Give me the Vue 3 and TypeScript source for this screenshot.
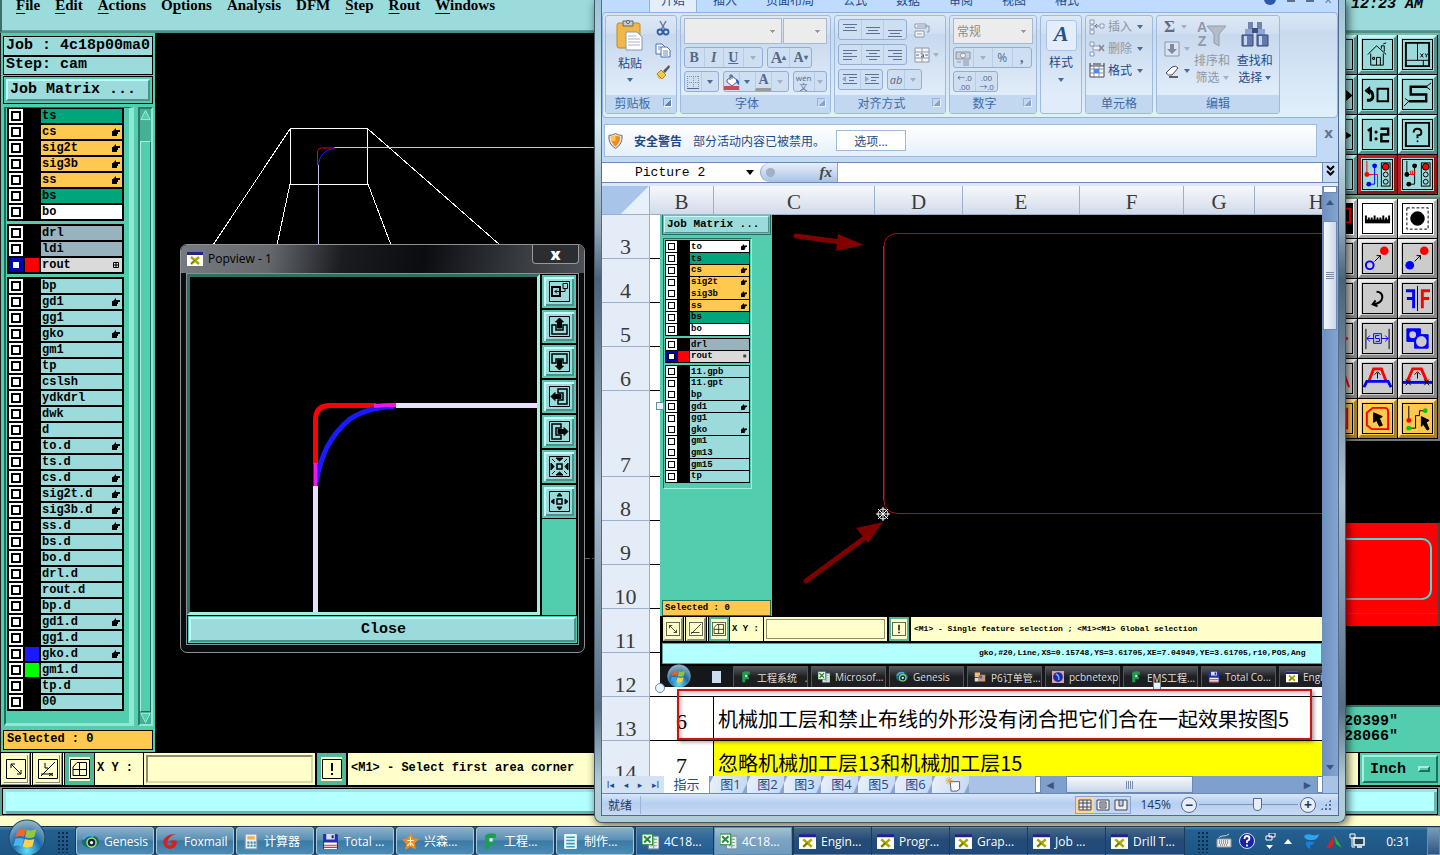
<script setup lang="ts">
import { ref } from 'vue'

interface Layer {
  name: string
  kind?: string
  hand?: boolean
  swatch?: string
  active?: boolean
}

const menus = [
  ['', 'F', 'ile'], ['', 'E', 'dit'], ['', 'A', 'ctions'], ['O', 'p', 'tions'],
  ['Analysis', '', ''], ['DFM', '', ''], ['', 'S', 'tep'], ['', 'R', 'out'], ['', 'W', 'indows'],
]

const plain = (names: string, hands: string[] = []): Layer[] =>
  names.split(' ').map((name) => ({ name, hand: hands.includes(name) }))

const layerGroups = ref<Layer[][]>([
  [
    { name: 'ts', kind: 'mask' },
    { name: 'cs', kind: 'signal', hand: true },
    { name: 'sig2t', kind: 'signal', hand: true },
    { name: 'sig3b', kind: 'signal', hand: true },
    { name: 'ss', kind: 'signal', hand: true },
    { name: 'bs', kind: 'mask' },
    { name: 'bo', kind: 'silk' },
  ],
  [
    { name: 'drl', kind: 'drill' },
    { name: 'ldi', kind: 'drill' },
    { name: 'rout', kind: 'rout', swatch: 'red', active: true },
  ],
  plain(
    'bp gd1 gg1 gko gm1 tp cslsh ydkdrl dwk d to.d ts.d cs.d sig2t.d sig3b.d ss.d bs.d bo.d drl.d rout.d bp.d gd1.d gg1.d gko.d gm1.d tp.d 00',
    ['gd1', 'gko', 'to.d', 'cs.d', 'sig2t.d', 'sig3b.d', 'ss.d', 'gd1.d', 'gko.d'],
  ).map((l) => ({ ...l, swatch: l.name === 'gko.d' ? 'blue' : l.name === 'gm1.d' ? 'lime' : undefined })),
])

const pictureGroups: Layer[][] = [
  [
    { name: 'to', kind: 'silk', hand: true },
    { name: 'ts', kind: 'mask' },
    { name: 'cs', kind: 'signal', hand: true },
    { name: 'sig2t', kind: 'signal', hand: true },
    { name: 'sig3b', kind: 'signal', hand: true },
    { name: 'ss', kind: 'signal', hand: true },
    { name: 'bs', kind: 'mask' },
    { name: 'bo', kind: 'silk' },
  ],
  [
    { name: 'drl', kind: 'drill' },
    { name: 'rout', kind: 'rout', swatch: 'red', active: true },
  ],
  plain('11.gpb 11.gpt bp gd1 gg1 gko gm1 gm13 gm15 tp', ['gd1', 'gko']),
]

const dot = (x: number, y: number, r: number, f: string) => `<circle cx="${x}" cy="${y}" r="${r}" fill="${f}" stroke="none"/>`
const light = `<rect x="19" y="3" width="9" height="24" fill="none"/>${dot(23.5, 7, 3.5, 'red')}<circle cx="23.5" cy="7" r="3.5" fill="none"/><circle cx="23.5" cy="15" r="2.5" fill="none"/><circle cx="23.5" cy="22.5" r="2.5" fill="none"/>`

const toolGroups = [
  {
    tone: 'aqua',
    tools: [
      { t: 'Previous', s: '' },
      { t: 'Home view', s: '<path d="M5 15L14 6l10 9M8 14v12h13V14M14 26v-8h4v8M10 18h2v2h-2zM19 9V6h3v6M21 4l3-1" fill="none"/>' },
      { t: 'Coordinates', s: '<path d="M15 3v18M3 21h24M21 21v6" fill="none"/><path d="M3 3h24v24H3z" stroke-width="2" fill="none"/><path d="M18 14l3 4M21 14l-3 4M23 14l1 2 2-2M24 16v2" fill="none"/>' },
      { t: 'Pan', s: '<path d="M24 11l6 5-6 5z"/>' },
      { t: 'Rotate view', s: '<path d="M15 9h11v13H15z" fill="none" stroke-width="2"/><path d="M4 21h3q4-1 3-6-1-4-4-4" fill="none" stroke-width="3"/><path d="M2 11l5-4v8z"/>' },
      { t: 'Snake', s: '<path d="M25 7H8v8h16v7H6" fill="none" stroke-width="2.5"/><path d="M24 7l5-4M24 7l4 3M6 22l-4-3M6 22l-5 5" fill="none"/>' },
      { t: 'Shift', s: '<path d="M24 13l5 3-5 3z"/>' },
      { t: 'Scale 1:2', s: '<path d="M5 11l3-2v13M18 9h8v6h-7v7h8" fill="none" stroke-width="2.5"/><path d="M12.5 11.5h2v2h-2zM12.5 18.500h2v2h-2z"/>' },
      { t: 'Query', s: '<path d="M3 3h24v24H3z" fill="none" stroke-width="2"/><path d="M11 13q0-4 4-4 4 0 4 4 0 3-4 3v3" fill="none" stroke-width="2"/><path d="M14.5 21.5h1v1h-1z"/>' },
      { t: 'Grid', s: '' },
      { t: 'Net analyzer', red: true, s: `<path d="M4 1v14h11v13" stroke="red" fill="none"/><path d="M12 6v19H6" stroke="blue" fill="none"/>${dot(4, 15, 2.5, 'red')}${dot(12, 6, 2.5, 'blue')}${dot(6, 25, 2.5, 'blue')}${light}` },
      { t: 'Net compare', red: true, s: `<path d="M4 1v14" fill="none"/><path d="M12 6v19H6" fill="none"/><path d="M6 15h6M8 15v-4M10 15v-4M12 15v-4" stroke="red"/>${dot(4, 15, 2.5, '#000')}${dot(12, 6, 2.5, '#000')}${dot(6, 25, 2.5, '#000')}${light}` },
    ],
  },
  {
    tone: 'grey',
    tools: [
      { t: 'Layer colors', white: true, s: '<path d="M0 0h30v30H0z"/><path d="M6 5h22v14H14" stroke="red" fill="none" stroke-width="2"/>' },
      { t: 'Ruler', white: true, s: '<path d="M2 16h26v4H2z" stroke="none"/><path d="M3 12v5M6 14v3M9 14v3M12 12v5M15 14v3M18 14v3M21 12v5M24 14v3M27 12v5" stroke-width="2"/>' },
      { t: 'Select pad', white: true, s: '<path d="M4 4h22v22H4z" fill="none" stroke-dasharray="3 2"/><circle cx="15" cy="15" r="7"/>' },
      { t: 'Change', s: '' },
      { t: 'Move feature', s: `${dot(22, 7, 4.5, 'red')}<circle cx="7" cy="22" r="4" fill="none" stroke="#00f" stroke-width="2"/><path d="M12 18l6-6M14 12h4v4" fill="none"/>` },
      { t: 'Copy feature', s: `${dot(22, 7, 4.5, 'red')}${dot(7, 22, 4.5, '#00f')}<path d="M12 18l6-6M14 12h4v4" fill="none"/>` },
      { t: 'Stretch', s: '' },
      { t: 'Rotate', s: '<path d="M14 8q6 0 6 6-1 6-9 7M13 17l-3 4 5 2" fill="none" stroke-width="2"/>' },
      { t: 'Mirror', s: '<path d="M15 2v26" fill="none"/><path d="M3 7h8v18M4 15h8" fill="none" stroke="#00f" stroke-width="3"/><path d="M28 7h-8v18M27 15h-8" fill="none" stroke="red" stroke-width="3"/>' },
      { t: 'Align', s: '<path d="M18 15h8M22 12l4 3-4 3" stroke="red" fill="none"/>' },
      { t: 'Resize', s: '<path d="M3 5v21M27 5v21" fill="none"/><path d="M4 15h7M19 15h7M7 12l-3 3 3 3M23 12l3 3-3 3M11 10h8v10h-8zM17 12h-4v3h4v3h-4" fill="none" stroke="#00f"/>' },
      { t: 'Group symbols', s: '<path d="M4 5h14v6h8v14H12v-7H4z" fill="#00f" stroke="#00f"/><circle cx="10" cy="11" r="3.5" fill="#ccc" stroke="none"/><circle cx="19" cy="18" r="5.5" fill="#ccc" stroke="none"/>' },
      { t: 'Taper', s: '<path d="M20 4l7 20" stroke="red" stroke-width="2"/>' },
      { t: 'Chamfer', s: '<path d="M6 18l5-13h8l5 13" fill="none" stroke="red" stroke-width="3"/><path d="M1 24l3-6h22l3 6" fill="none" stroke="#00f" stroke-width="3"/><path d="M15 15V9M12 11l3-3 3 3" fill="none"/>' },
      { t: 'Trim', s: '<path d="M4 19l6-14h9l6 14" fill="none" stroke="red" stroke-width="3"/><path d="M0 19h30" stroke="#00f" stroke-width="3"/><path d="M15 15V9M12 11l3-3 3 3M3 16l5 6M8 16l-5 6M22 16l5 6M27 16l-5 6" fill="none"/>' },
      { t: 'Frame', gold: true, s: '<path d="M3 5h22v20H3z" stroke="red" fill="none" stroke-width="2"/>' },
      { t: 'Polygon select', gold: true, s: '<path d="M10 4h12q4 0 4 4v18H9L4 22V9z" fill="none" stroke="red" stroke-width="2"/><path d="M11 9l9 4-3 2 3 7-3 1-3-6-3 2z"/>' },
      { t: 'Net select', gold: true, s: `<path d="M6 2v14" fill="none"/><path d="M6 25h7V12h4V7h7" fill="none"/>${dot(6, 17, 2.5, 'red')}${dot(6, 25, 2.5, '#0c0')}${dot(23, 7, 2.5, '#0c0')}<path d="M19 13l8 4-3 2 3 7-2 1-4-6-2 2z"/>` },
    ],
  },
]

const popTools = [
  { t: 'Zoom area', s: '<path d="M3 6h8v9H3z" fill="none" stroke-width="2"/><path d="M14 2.500h4.500v5H14zM5.500 10.500H16V8M8 8.500l-2 2 2 2" fill="none"/>' },
  { t: 'Up', s: '<path d="M3 9v9h15V9h-4v5H7V9z" fill="none" stroke-width="1.5"/><path d="M10.500 2l4 4h-2v6h-4V6h-2z"/>' },
  { t: 'Down', s: '<path d="M3 12V3h15v9h-4V8H7v4z" fill="none" stroke-width="1.500"/><path d="M10.500 19l4-4h-2V9h-4v6h-2z"/>' },
  { t: 'Left', s: '<path d="M9 3h9v15H9v-4h5V7H9z" fill="none" stroke-width="1.500"/><path d="M2 10.500l4-4v2h6v4H6v2z"/>' },
  { t: 'Right', s: '<path d="M12 3H3v15h9v-4H7V7h5z" fill="none" stroke-width="1.500"/><path d="M19 10.500l-4-4v2H9v4h6v2z"/>' },
  { t: 'Zoom in', s: '<path d="M8 8h5v5H8z" fill="none" stroke-width="1.500"/><path d="M7 2h7l-3.500 3zM7 19h7l-3.500-3zM2 7v7l3-3.500zM19 7v7l-3-3.500zM3 3l3 3M18 3l-3 3M3 18l3-3M18 18l-3-3"/>' },
  { t: 'Zoom out', s: '<path d="M8 8h5v5H8z" fill="none" stroke-width="1.500"/><path d="M8 5h5l-2.500-3zM8 16h5l-2.500 3zM5 8v5l-3-2.500zM16 8v5l3-2.500z"/>' },
]

const ribbonTabs = ['开始', '插入', '页面布局', '公式', '数据', '审阅', '视图', '格式']

const xlogo = '<rect x="0" y="1" width="16" height="14" fill="#fff"/><path d="M0 1h16v3H0z" fill="#228"/><path d="M4 6l8 7M12 6l-8 7" stroke="#aa0" stroke-width="2.500"/><path d="M4 13l4-4" stroke="#660" stroke-width="1"/>'
const icons: Record<string, string> = {
  x: xlogo,
  genesis: '<ellipse cx="8" cy="8" rx="8" ry="6" fill="#1a6a6a"/><circle cx="9" cy="9" r="5" fill="#8fe070"/><circle cx="9" cy="9" r="3.500" fill="#124"/><circle cx="9" cy="9" r="1.500" fill="#fff"/><path d="M1 6q4-6 10-3" stroke="#5ad" stroke-width="2" fill="none"/>',
  foxmail: '<path d="M13 1Q2 1 1 9q1 6 7 6 6-1 6-7-4-3-8 1 3-1 4 1-2 3-5 1Q4 4 13 1z" fill="#d3221e"/>',
  calc: '<rect x="3" y="1" width="11" height="14" fill="#e8f0f8" stroke="#89a"/><path d="M5 3h7v3H5z" fill="#f6b040"/><path d="M5 8h2v2H5zM8 8h2v2H8zM11 8h2v2h-2zM5 11h2v2H5zM8 11h2v2H8zM11 11h2v2h-2z" fill="#48a"/>',
  floppy: '<path d="M1 1h13l1 1v13H1z" fill="#2230b8"/><path d="M4 1h8v5H4z" fill="#dde"/><path d="M9 2h2v3H9z" fill="#228"/><path d="M2 9h12v6H2z" fill="#fff"/><path d="M2 11h12v1H2zM2 13h12v1H2z" fill="#c33"/>',
  star: '<path d="M8 0l2.500 5 5.500.6-4 4 1 6L8 13l-5 3 1-6-4-4L5.500 5z" fill="#f58a1c"/><path d="M8 4v8M5 7h6M5 12l3-3 3 3" stroke="#fff3c0" fill="none"/>',
  f: '<path d="M3 15V2q5-3 10-1v4q-3-1-6 0v3h5v3H7v4z" fill="#1f9d4d"/><path d="M7 5h3v3H7z" fill="#cfe"/>',
  note: '<rect x="2" y="1" width="12" height="14" rx="1" fill="#e8f6fb"/><path d="M4 4h8M4 7h8M4 10h8M4 13h8" stroke="#3a9cb8" stroke-width="1.500"/>',
  excel: '<rect x="6" y="3" width="10" height="12" fill="#e4f2e0" stroke="#789"/><path d="M8 6h6M8 9h6M8 12h6M11 4v10" stroke="#7aa"/><rect x="0" y="1" width="10" height="10" fill="#fff" stroke="#2c8c3c"/><path d="M2 3l6 6M8 3L2 9" stroke="#2c8c3c" stroke-width="2"/>',
  p6: '<path d="M1 2h7v6H1z" fill="#fb6"/><path d="M6 5h9v9H6z" fill="#c96"/><path d="M7 6h4v4H7z" fill="#46c"/><path d="M1 9h5v5H1z" fill="#ddd"/>',
  globe: '<rect width="16" height="16" fill="#d8a0a8"/><circle cx="8" cy="8" r="6.500" fill="#1a2aa8"/><path d="M5 4q5 2 4 8" stroke="#7af" fill="none" stroke-width="2"/>',
  paste: '<rect x="1" y="3" width="23" height="25" rx="2" fill="#f0b848" stroke="#b98a30"/><path d="M7 1h10v5H7z" fill="#c8ccd4" stroke="#666"/><circle cx="12" cy="2" r="1.500" fill="#fff" stroke="#555"/><path d="M10 12h11l5 5v13H10z" fill="#fff" stroke="#8899b0"/><path d="M12 16h8M12 19h12M12 22h12M12 25h12" stroke="#aab4c4"/>',
  cut: '<path d="M5 1l5 9M11 1L6 10" stroke="#6a7a98" stroke-width="1.500"/><circle cx="5" cy="12" r="2.500" fill="none" stroke="#2f5da8" stroke-width="1.800"/><circle cx="11" cy="12" r="2.500" fill="none" stroke="#2f5da8" stroke-width="1.800"/>',
  copy: '<path d="M1 2h6l3 3v7H1z" fill="#fff" stroke="#4a70a8"/><path d="M6 5h6l3 3v7H6z" fill="#fff" stroke="#4a70a8"/><path d="M8 9h5M8 11h5M8 13h5M3 5h3M3 7h2" stroke="#5d89c8"/>',
  brush: '<path d="M14 1l1 2-5 6-2-2z" fill="#555"/><path d="M6 6l5 5-4 4-5-5z" fill="#f2c94a" stroke="#a8862c"/><path d="M1 9l5 6H4z" fill="#e8b030"/>',
  left: '<path d="M1 3.500h14M1 6.500h9M1 9.500h14M1 12.500h9" stroke="#5b7296"/>',
  center: '<path d="M1 3.500h14M4 6.500h8M1 9.500h14M4 12.500h8" stroke="#5b7296"/>',
  right: '<path d="M1 3.500h14M6 6.500h9M1 9.500h14M6 12.500h9" stroke="#5b7296"/>',
  top: '<path d="M1 2.500h14M3 5.500h10M1 8.500h14" stroke="#5b7296"/>',
  mid: '<path d="M1 5.500h14M3 8.500h10M1 11.500h14" stroke="#5b7296"/>',
  bottom: '<path d="M1 8.500h14M3 11.500h10M1 14.500h14" stroke="#5b7296"/>',
  outdent: '<path d="M1 2.500h14M7 5.500h8M7 8.500h5M1 11.500h14" stroke="#5b7296"/><path d="M0 7l4-3v6z" fill="#8fa5c6"/>',
  indent: '<path d="M1 2.500h14M7 5.500h8M7 8.500h5M1 11.500h14" stroke="#5b7296"/><path d="M5 7L1 4v6z" fill="#8fa5c6"/>',
  wrap: '<path d="M1 2h11v4H1zM1 9h9v6H1z" fill="#f4f6fa" stroke="#8a98b0"/><path d="M3 4h12v6h-2M3 12h5" stroke="#8a98b0" fill="none"/>',
  merge: '<path d="M1 1h14v14H1zM1 5h14M1 11h14M8 1v4M8 11v4" fill="#f4f6fa" stroke="#8a98b0"/><path d="M2 8h3M14 8h-3M6.500 7q3-1 3 1v2h-2q-1-1 2-1.500" stroke="#667" fill="none"/>',
  grid: '<path d="M2 2.500h12M2 8.500h12M2.500 2v12M8.500 2v12M13.500 2v12" fill="none" stroke="#7f93b5" stroke-dasharray="1 1"/><path d="M2 14.500h12" stroke="#54698c"/>',
  bucket: '<path d="M3 6l5-4 6 5-6 5-5-4z" fill="#fff" stroke="#46618c"/><path d="M6 6V1h2v4" stroke="#46618c" fill="none"/><path d="M12 5q4 1 3 6-2-1-3-4z" fill="#2d66b8"/><path d="M0 12h16v4H0z" fill="#c44d58"/>',
  money: '<path d="M1 2h14v7H1z" fill="#c9ced8" stroke="#8a93a6"/><circle cx="8" cy="5.500" r="2.500" fill="#eee" stroke="#8a93a6"/><path d="M8 11h6M8 13h6M8 15h6M2 12h4" stroke="#8a93a6"/>',
  insert: '<path d="M1 1h4v4H1zM1 6h4v4H1zM1 11h4v4H1zM11 5h4v4h-4z" fill="#eef" stroke="#8c9ab4"/><path d="M10 7H6M8 5L6 7l2 2" stroke="#777" fill="none"/>',
  del: '<path d="M1 1h4v4H1zM1 11h4v4H1zM4 5h7v4H4z" fill="#eef" stroke="#8c9ab4"/><path d="M10 4l5 6M15 4l-5 6" stroke="#888" stroke-width="1.500"/>',
  format: '<path d="M1 3h14v11H1z" fill="#fff" stroke="#445"/><path d="M1 6h14M1 10h14M5 3v11M10 3v11" stroke="#889"/><path d="M5 6h5v4H5z" fill="#4a8cf0"/><path d="M1 0v3M4 1h8M15 0v3" stroke="#333"/>',
  fill: '<path d="M1 1h14v14H1z" fill="#dde4ee" stroke="#8a98b0"/><path d="M6 3h4v5h3l-5 5-5-5h3z" fill="#7d8ca6"/>',
  erase: '<path d="M2 10l6-6q4-2 6 1l-6 7q-4 1-6-2z" fill="#fff" stroke="#445"/><path d="M5 14h9" stroke="#333" stroke-width="1.500"/>',
  sort: '<path d="M10 6h19l-7 8v12l-5-3v-9z" fill="#b4bcc8" stroke="#929cac"/>',
  find: '<path d="M7 2h5v7H7zM16 2h5v7h-5z" fill="#7184ac"/><path d="M4 9h9v6H4zM15 9h9v6h-9z" fill="#8fa5d6"/><path d="M11 8h6v5h-6z" fill="#3d5180"/><path d="M1 15h11v11H1zM16 15h11v11H16z" fill="#6379ad" stroke="#33466f"/><path d="M3 16h3v9H3zM18 16h3v9h-3z" fill="#c8d5f2"/>',
  shield: '<path d="M8 0q3 2 7 2 1 9-7 14Q0 11 1 2q4 0 7-2z" fill="#e8e8ea" stroke="#666"/><path d="M8 2q3 1 5 1.500Q13 10 8 14 3 10 3 3.500 6 3 8 2z" fill="#f58a1f"/><path d="M8 2v6H3V3.500Q6 3 8 2z" fill="#ffc84a"/>',
}

const tasks = [
  { i: 'genesis', n: 'Genesis' }, { i: 'foxmail', n: 'Foxmail' }, { i: 'calc', n: '计算器' }, { i: 'floppy', n: 'Total ...' },
  { i: 'star', n: '兴森...' }, { i: 'f', n: '工程...' }, { i: 'note', n: '制作...' },
]
const xTasks = ['Engin...', 'Progr...', 'Grap...', 'Job ...', 'Drill T...']
const shotTasks = [
  { i: 'f', n: '工程系统   ...' }, { i: 'excel', n: 'Microsof...' }, { i: 'genesis', n: 'Genesis' }, { i: 'p6', n: 'P6订单管...' },
  { i: 'globe', n: 'pcbnetexp' }, { i: 'f', n: 'EMS工程...' }, { i: 'floppy', n: 'Total Co...' }, { i: 'x', n: 'Enginee' },
]
const emptyRows = [3, 4, 5, 6, 7, 8, 9, 10, 11, 12]
const columns = ['B', 'C', 'D', 'E', 'F', 'G', 'H']
const zoomLevel = ref(145)
const coords = ref('')
const noteRowText = '机械加工层和禁止布线的外形没有闭合把它们合在一起效果按图5'
</script>

<template>
  <div class="desktop">
    <main class="cam">
      <header class="menubar">
        <nav class="menus">
          <button v-for="m in menus" :key="m.join('')" class="menu">{{ m[0] }}<u>{{ m[1] }}</u>{{ m[2] }}</button>
        </nav>
        <time class="clock">12:23 AM</time>
      </header>

      <div class="work">
        <aside class="side">
          <div class="jobinfo">
            <div>Job : 4c18p00ma0</div>
            <div>Step: cam</div>
          </div>
          <div class="matrix"><button class="bevel">Job Matrix ...</button></div>
          <div class="listwrap">
            <div class="list">
              <div v-for="(g, gi) in layerGroups" :key="gi" class="group">
                <label v-for="l in g" :key="l.name" class="layer">
                  <input type="checkbox" class="tick" :class="{ on: l.active }" />
                  <span class="swatch" :class="l.swatch" />
                  <span class="lname" :class="l.kind">{{ l.name }}
                    <svg v-if="l.hand" class="hand" viewBox="0 0 8 8"><path d="M0 3h1l3-3v2h4v2H6v2H5v2H0z" /></svg>
                    <svg v-if="l.active" class="hand" viewBox="0 0 8 8"><path d="M1.500 1.500h5v5h-5zM4 1v6M1 4h6" fill="none" stroke="#000" /></svg>
                  </span>
                </label>
              </div>
            </div>
            <div class="scroll">
              <svg viewBox="0 0 12 12"><path d="M6 1l5 10H1z" fill="#52ceae" stroke="#a8eedd" /></svg>
              <div class="thumb" />
              <svg viewBox="0 0 12 12"><path d="M6 11L1 1h10z" fill="#52ceae" stroke="#a8eedd" /></svg>
            </div>
          </div>
          <div class="selected">Selected : 0</div>
        </aside>

        <section class="canvas">
          <svg width="445" height="719" viewBox="155 33 445 719" fill="none">
            <g shape-rendering="crispEdges" stroke="#fff">
              <path d="M290.500 128.500h77v56h-77zM290 129L213 245M290 184L277 245M368 184L391 245M368 129L500 245" />
            </g>
            <path d="M318.500 165v80M334 147.500H595" stroke="#c9c3ee" />
            <path d="M317.500 165v-13q0-4 5-4h12" stroke="#e00" />
            <path d="M318.500 165q1-14 16-17" stroke="#22f" />
            <path d="M585 558.500h10" stroke="#666" stroke-dasharray="5 2" />
          </svg>
        </section>

        <aside class="right">
          <div v-for="tg in toolGroups" :key="tg.tone" class="tools" :class="tg.tone">
            <button
              v-for="b in tg.tools" :key="b.t" class="tool" :aria-label="b.t"
              :class="{ redbox: 'red' in b, whitebox: 'white' in b, gold: 'gold' in b }"
            >
              <svg viewBox="0 0 30 30" stroke="#000" v-html="b.s" />
            </button>
          </div>
          <div class="overview">
            <svg width="122" height="102" viewBox="0 0 122 102" fill="none">
              <rect x="-20" y="16" width="133" height="60" rx="9" stroke="#40e0e0" stroke-width="2" />
              <path d="M0 76h104" stroke="#999" stroke-width="2" />
              <path d="M0 90.500h120" stroke="#d0109a" />
            </svg>
          </div>
          <div class="coord">20399"<br />28066"</div>
        </aside>
      </div>

      <div class="command">
        <button class="cbtn" aria-label="Select"><svg viewBox="0 0 20 20"><path d="M.500.500h19v19H.500zM5 5l10 10M5 9V5h4M15 11v4h-4" /></svg></button>
        <button class="cbtn" aria-label="Angle"><svg viewBox="0 0 20 20"><path d="M.500.500h19v19H.500zM3 17L17 3M3 15h12M7 4v5h3M11 14l4 3M15 14l-4 3" /></svg></button>
        <button class="cbtn on" aria-label="Grid"><svg viewBox="0 0 20 20"><path d="M3 16.500V8l4-4.500h9.500v13zM3 10.500h14M9.500 3.500v13M.500.500h19v19H.500z" /></svg></button>
        <label class="xy" for="xy">X Y :</label>
        <div class="xybox"><input id="xy" v-model="coords" type="text" /></div>
        <button class="cbtn on" aria-label="Alert"><svg viewBox="0 0 20 20"><path d="M.500.500h19v19H.500z" /><path d="M10 4v8M10 14v2" stroke-width="2" /></svg></button>
        <output class="msg">&lt;M1&gt; - Select first area corner</output>
        <div class="unitbox"><button class="unit">Inch <i /></button></div>
      </div>
      <div class="status"><div /></div>
    </main>

    <section class="popview" aria-label="Popview - 1">
      <header>
        <svg class="ic" viewBox="0 0 16 16" v-html="icons.x" />
        <h2>Popview - 1</h2>
        <button class="close" aria-label="Close window">x</button>
      </header>
      <div class="pbody">
        <div class="pmain">
          <div class="pcanvas">
            <svg width="348" height="337" viewBox="190 277 348 337" fill="none" stroke-width="5">
              <path d="M315.500 464V420Q315.500 405.500 330 405.500H376" stroke="red" />
              <path d="M316.500 482Q322 442 350 419 368 407 394 406.500" stroke="#1a1aff" />
              <path d="M374 406q10-1 22-1M315.500 463v23" stroke="#f018e8" stroke-width="4" />
              <path d="M315.500 486V614M396 405.500H538" stroke="#e8e0fa" />
            </svg>
          </div>
          <div class="ptools">
            <button v-for="p in popTools" :key="p.t" class="ptool" :aria-label="p.t">
              <svg viewBox="0 0 21 21" stroke="#000"><path d="M.500.500h20v20H.500z" fill="none" /><g v-html="p.s" /></svg>
            </button>
          </div>
        </div>
        <div class="pclose"><button class="bevel">Close</button></div>
      </div>
    </section>

    <section class="excel" aria-label="Excel">
      <div class="client">
        <nav class="tabs">
          <span class="orb" />
          <button v-for="(t, i) in ribbonTabs" :key="t" :class="{ cur: i === 0 }">{{ t }}</button>
          <span class="wctl"><i /><i class="w1" /><i class="w2" /><i class="w3">x</i></span>
        </nav>

        <div class="ribbon">
          <section class="rg g1">
            <div class="rb">
              <button class="big"><svg width="28" height="32" viewBox="0 0 28 32" v-html="icons.paste" />粘贴<b class="dn" /></button>
              <div class="stack">
                <button v-for="k in ['cut', 'copy', 'brush']" :key="k" :aria-label="k"><svg class="ic" viewBox="0 0 16 16" v-html="icons[k]" /></button>
              </div>
            </div>
            <h3>剪贴板<i class="launch" /></h3>
          </section>

          <section class="rg g2">
            <div class="rb col">
              <div class="row sel"><select aria-label="字体名称" class="wide"><option /></select><select aria-label="字号"><option /></select></div>
              <div class="row">
                <div class="bg w79"><button class="ser"><b>B</b></button><button class="ser"><em>I</em></button><button class="ser"><u>U</u></button><button><b class="dn dim" /></button></div>
                <div class="bg w45"><button class="ser l">A<sup>▴</sup></button><button class="ser">A<sup>▾</sup></button></div>
              </div>
              <div class="row">
                <div class="bg w35"><button><svg class="ic" viewBox="0 0 16 16" v-html="icons.grid" /></button><button><b class="dn" /></button></div>
                <div class="bg w67"><button><svg class="ic" viewBox="0 0 16 16" v-html="icons.bucket" /></button><button><b class="dn" /></button><button class="ser fc">A</button><button><b class="dn dim" /></button></div>
                <div class="bg w35"><button class="wen"><span>wén</span><span>文</span></button><button class="thin"><b class="dn dim" /></button></div>
              </div>
            </div>
            <h3>字体<i class="launch pale" /></h3>
          </section>

          <section class="rg g3">
            <div class="rb col">
              <div class="row"><div class="bg w69"><button v-for="k in ['top', 'mid', 'bottom']" :key="k" :aria-label="k"><svg class="ic" viewBox="0 0 16 16" v-html="icons[k]" /></button></div><button class="flat" aria-label="自动换行"><svg class="ic" viewBox="0 0 16 16" v-html="icons.wrap" /></button></div>
              <div class="row"><div class="bg w69"><button v-for="k in ['left', 'center', 'right']" :key="k" :aria-label="k"><svg class="ic" viewBox="0 0 16 16" v-html="icons[k]" /></button></div><button class="flat" aria-label="合并"><svg class="ic" viewBox="0 0 16 16" v-html="icons.merge" /><b class="dn dim" /></button></div>
              <div class="row"><div class="bg w45"><button v-for="k in ['outdent', 'indent']" :key="k" :aria-label="k"><svg class="ic" viewBox="0 0 16 16" v-html="icons[k]" /></button></div><div class="bg w35"><button class="slant">ab</button><button><b class="dn dim" /></button></div></div>
            </div>
            <h3>对齐方式<i class="launch pale" /></h3>
          </section>

          <section class="rg g4">
            <div class="rb col">
              <div class="row sel"><select aria-label="数字格式" class="num"><option>常规</option></select></div>
              <div class="row"><div class="bg w79"><button><svg class="ic" viewBox="0 0 16 16" v-html="icons.money" /></button><button><b class="dn dim" /></button><button>%</button><button class="ser">,</button></div></div>
              <div class="row"><div class="bg w45"><button class="dec"><span>←.0</span><span>.00</span></button><button class="dec"><span>.00</span><span>→.0</span></button></div></div>
            </div>
            <h3>数字<i class="launch pale" /></h3>
          </section>

          <section class="rg g5">
            <button class="style"><span>A<i /></span>样式<b class="dn" /></button>
          </section>

          <section class="rg g6">
            <div class="rb col cells">
              <button class="dis"><svg class="ic" viewBox="0 0 16 16" v-html="icons.insert" />插入<b class="dn" /></button>
              <button class="dis"><svg class="ic" viewBox="0 0 16 16" v-html="icons.del" />删除<b class="dn" /></button>
              <button><svg class="ic" viewBox="0 0 16 16" v-html="icons.format" />格式<b class="dn" /></button>
            </div>
            <h3>单元格</h3>
          </section>

          <section class="rg g7">
            <div class="rb">
              <div class="stack edit">
                <button class="sig">Σ<b class="dn dim" /></button>
                <button aria-label="填充"><svg class="ic" viewBox="0 0 16 16" v-html="icons.fill" /><b class="dn dim" /></button>
                <button aria-label="清除"><svg class="ic" viewBox="0 0 16 16" v-html="icons.erase" /><b class="dn" /></button>
              </div>
              <button class="big dis"><span class="az"><svg width="30" height="28" viewBox="0 0 30 28" v-html="icons.sort" /><em><span>A</span><span>Z</span></em></span>排序和<span>筛选<b class="dn dim" /></span></button>
              <button class="big"><svg width="28" height="28" viewBox="0 0 28 28" v-html="icons.find" />查找和<span>选择<b class="dn" /></span></button>
            </div>
            <h3>编辑</h3>
          </section>
        </div>

        <div class="security">
          <div class="sbox">
            <svg class="ic" viewBox="0 0 16 16" v-html="icons.shield" />
            <strong>安全警告</strong>
            <span>部分活动内容已被禁用。</span>
            <button>选项...</button>
          </div>
          <button class="sx" aria-label="关闭">x</button>
        </div>

        <div class="formula">
          <div class="name"><input aria-label="名称框" value="Picture 2" /><b class="dn" /></div>
          <div class="fx"><i /><em>fx</em></div>
          <input class="finput" aria-label="编辑栏" />
          <button aria-label="展开编辑栏"><svg width="9" height="12" viewBox="0 0 9 12"><path d="M1 1l3.500 3.500L8 1M1 6l3.500 3.500L8 6" fill="none" stroke="#000" stroke-width="2" /></svg></button>
        </div>

        <div class="sheetrow">
          <div class="sheet">
            <table>
              <colgroup><col class="k0" /><col v-for="c in columns" :key="c" :class="'k' + c" /></colgroup>
              <thead><tr><th class="corner" /><th v-for="c in columns" :key="c" scope="col">{{ c }}</th></tr></thead>
              <tbody>
                <tr v-for="r in emptyRows" :key="r" :class="{ first: r === 3, tall: r === 7 }"><th scope="row">{{ r }}</th><td /><td colspan="6" /></tr>
                <tr><th scope="row">13</th><td class="no">6</td><td colspan="6" class="txt">{{ noteRowText }}</td></tr>
                <tr><th scope="row" class="last">14</th><td class="no">7</td><td colspan="6" class="txt yellow">忽略机械加工层13和机械加工层15</td></tr>
              </tbody>
            </table>

            <figure class="shot">
              <div class="smain">
                <div class="sside">
                  <div class="matrix"><span class="bevel">Job Matrix ...</span></div>
                  <div class="list">
                    <div v-for="(g, gi) in pictureGroups" :key="gi" class="group" :class="'p' + gi">
                      <div v-for="l in g" :key="l.name" class="layer">
                        <i class="tick" :class="{ on: l.active }" />
                        <span class="swatch" :class="l.swatch" />
                        <span class="lname" :class="l.kind">{{ l.name }}
                          <svg v-if="l.hand" class="hand" viewBox="0 0 8 8"><path d="M0 3h1l3-3v2h4v2H6v2H5v2H0z" /></svg>
                          <svg v-if="l.active" class="hand" viewBox="0 0 8 8"><path d="M3 2h4v4H3z" fill="#444" /></svg>
                        </span>
                      </div>
                    </div>
                  </div>
                  <div class="ssel">Selected : 0</div>
                </div>
                <svg class="sdraw" width="551" height="401" viewBox="772 215 551 401" fill="none">
                  <path d="M1323 233.500H898q-14 0-14 14V500q0 13 14 13.500h425" stroke="#a81414" />
                  <path d="M883.500 246v254" stroke="#e01818" />
                  <path d="M796 236l44 6M806 581l60-44" stroke="#800000" stroke-width="5" stroke-linecap="round" />
                  <path d="M838 234l26 11-28 6zM883 522l-15 21-12-15z" fill="#800000" />
                  <g stroke="#fff"><circle cx="883" cy="514" r="5" /><path d="M876 514h14M883 507v14M878 509l10 10M888 509l-10 10" /></g>
                </svg>
              </div>
              <div class="scmd">
                <span class="cbtn"><svg viewBox="0 0 20 20"><path d="M.500.500h19v19H.500zM5 5l10 10M5 9V5h4M15 11v4h-4" /></svg></span>
                <span class="cbtn"><svg viewBox="0 0 20 20"><path d="M.500.500h19v19H.500zM3 17L17 3M3 15h12" /></svg></span>
                <span class="cbtn on"><svg viewBox="0 0 20 20"><path d="M3 16.500V8l4-4.500h9.500v13zM3 10.500h14M9.500 3.500v13M.500.500h19v19H.500z" /></svg></span>
                <span class="xy">X Y :</span>
                <span class="xybox"><i /></span>
                <span class="cbtn on"><svg viewBox="0 0 20 20"><path d="M.500.500h19v19H.500z" /><path d="M10 4v8M10 14v2" stroke-width="2" /></svg></span>
                <span class="msg">&lt;M1&gt; - Single feature selection ; &lt;M1&gt;&lt;M1&gt; Global selection</span>
              </div>
              <div class="sstat">gko,#20,Line,XS=0.15748,YS=3.61705,XE=7.04949,YE=3.61705,r10,POS,Ang</div>
              <div class="stask">
                <svg class="start" viewBox="0 0 36 36"><circle cx="18" cy="18" r="17" fill="url(#orb)" stroke="#7aa" /><path d="M9 12q4-3 8-1l-2 7q-4-2-8 0z" fill="#e8612a" /><path d="M18 11q4 2 9-1l-2 8q-5 2-9 0z" fill="#8cc63e" /><path d="M7 20q4-2 8 0l-2 7q-4-2-8 0z" fill="#3aa0e8" /><path d="M16 20q4 2 9 0l-2 7q-5 2-9 0z" fill="#ffcf3a" /></svg>
                <i class="mini" />
                <span v-for="t in shotTasks" :key="t.n"><svg class="ic" viewBox="0 0 16 16" v-html="icons[t.i]" />{{ t.n }}</span>
              </div>
            </figure>
            <i class="handle h1" /><i class="handle h2" /><i class="handle h3" />
            <div class="redframe" />
          </div>
          <div class="vscroll"><i class="split" /><b class="up" /><i class="vthumb"><i class="ridge" /></i><b class="dn" /></div>
        </div>

        <div class="sheettabs">
          <div class="nav"><button v-for="n in ['I◂', '◂', '▸', '▸I']" :key="n">{{ n }}</button></div>
          <button class="cur">指示</button>
          <button v-for="n in 6" :key="n" class="st">图{{ n }}</button>
          <button class="st" aria-label="插入工作表"><svg class="ic" viewBox="0 0 16 16"><path d="M5 5h10v8l-3 2H6z" fill="#fff" stroke="#557" /><path d="M4 0v8M0 4h8M1 1l6 6M7 1L1 7" stroke="#e8a030" /></svg></button>
          <div class="hscroll"><i class="split" /><b>◂</b><i class="hthumb"><i class="ridge" /></i><b class="end">▸</b><i class="split" /></div>
        </div>

        <div class="xstatus">
          <span class="ready">就绪</span>
          <div class="views"><button v-for="n in 3" :key="n" :class="{ cur: n === 1 }" :aria-label="'视图 ' + n"><svg viewBox="0 0 14 12"><path v-if="n === 1" d="M1 1h12v10H1zM1 4h12M1 8h12M5 1v10M9 1v10" /><path v-else-if="n === 2" d="M1 1h12v10H1zM4 3h6v6H4zM5 5h4M5 7h4" /><path v-else d="M1 1h12v10H1zM5 1v6h4V1" /></svg></button></div>
          <span class="pct">{{ zoomLevel }}%</span>
          <button class="rnd" aria-label="缩小">−</button>
          <input v-model.number="zoomLevel" type="range" min="10" max="235" aria-label="缩放" />
          <button class="rnd" aria-label="放大">+</button>
          <span class="grip" />
        </div>
      </div>
    </section>

    <footer class="taskbar">
      <button class="startbtn" aria-label="开始">
        <svg viewBox="0 0 36 36">
          <defs><radialGradient id="orb" cx=".5" cy=".85" r=".8"><stop offset="0" stop-color="#5fe0ff" /><stop offset=".5" stop-color="#1c6aa8" /><stop offset="1" stop-color="#8fb0c4" /></radialGradient></defs>
          <circle cx="18" cy="18" r="17" fill="url(#orb)" stroke="#234a66" />
          <path d="M9 11q4-3 8-1l-2 7q-4-2-8 0z" fill="#ea6a2c" /><path d="M18 10q4 2 9-1l-2 8q-5 2-9 0z" fill="#93c83e" /><path d="M7 19q4-2 8 0l-2 7q-4-2-8 0z" fill="#4ab4f0" /><path d="M16 19q4 2 9 0l-2 7q-5 2-9 0z" fill="#ffd24a" />
        </svg>
      </button>
      <i class="dots" />
      <button v-for="t in tasks" :key="t.n" class="task"><svg class="ic" viewBox="0 0 16 16" v-html="icons[t.i]" />{{ t.n }}</button>
      <div class="tgroup">
        <button class="task"><svg class="ic" viewBox="0 0 16 16" v-html="icons.excel" />4C18...</button>
        <button class="task cur"><svg class="ic" viewBox="0 0 16 16" v-html="icons.excel" />4C18...</button>
      </div>
      <div class="tgroup dark">
        <button v-for="t in xTasks" :key="t" class="task"><svg class="ic" viewBox="0 0 16 16" v-html="icons.x" />{{ t }}</button>
      </div>
      <i class="dots" />
      <div class="tray">
        <svg class="ic" viewBox="0 0 16 16"><path d="M1 6h14v8H1z" fill="#e8e8e8" stroke="#999" /><path d="M3 8h10M3 10h10M4 12h8" stroke="#555" stroke-dasharray="1 1" /><path d="M3 5q0-2 4-2t6-2" stroke="#ccc" fill="none" /></svg>
        <svg class="ic" viewBox="0 0 16 16"><circle cx="8" cy="8" r="7.500" fill="#1a22a8" stroke="#dde" /><path d="M5.500 6q0-3 2.500-3t2.500 2.500Q10.500 7 8 8v2M8 11.500v2" stroke="#fff" stroke-width="1.800" fill="none" /></svg>
        <svg class="ic" viewBox="0 0 16 16"><path d="M7 0h6v4H7zM4 3h6v4H4z" fill="#1c4a78" stroke="#fff" /><path d="M4 12h7l-3.500 4z" fill="#fff" /></svg>
        <svg class="ic nudge" viewBox="0 0 16 16"><path d="M4 11l4-5 4 5z" fill="#fff" /></svg>
        <svg class="ic" viewBox="0 0 16 16"><path d="M1 3q3-3 8-1 4 1 7-1-1 6-7 6H7Q2 7 1 3z" fill="#2ba4f5" /><path d="M3 9q4-1 8 0-1 4-4 3v4q-5-2-4-7z" fill="#1880e0" /></svg>
        <svg class="ic" viewBox="0 0 16 16"><path d="M8 2L0 15h4l4-4z" fill="#d82020" /><path d="M8 2l8 13-6-4z" fill="#28b838" /></svg>
        <svg class="ic" viewBox="0 0 16 16"><path d="M5 5h10v7H5zM8 14h5" fill="#245" stroke="#fff" stroke-width="1.500" /><path d="M1 1h5v4H1zM3 5v9h3" fill="none" stroke="#fff" /></svg>
        <time>0:31</time>
      </div>
      <button class="peek" aria-label="显示桌面" />
    </footer>
  </div>
</template>

<style>
body { background: #000; }
</style>

<style scoped>
* { box-sizing: border-box; }
.desktop { position: relative; height: 100vh; overflow: hidden; display: flex; flex-direction: column; font-family: "Open Sans", "Noto Sans CJK SC", sans-serif; font-size: 12px; background: #ffc; color: #000; }
button, input, select { font: inherit; color: inherit; margin: 0; padding: 0; border: 0; background: none; border-radius: 0; }
h2, h3, figure { margin: 0; font-weight: 400; }
i { font-style: normal; }
.ic { width: 16px; height: 16px; flex: none; display: block; }

/* CAM window */
.cam { flex: 1; min-height: 0; display: flex; flex-direction: column; font-family: "Liberation Mono", monospace; font-weight: 700; font-size: 12px; }
.menubar { height: 33px; flex: none; display: flex; justify-content: space-between; background: #9bdbdb; border-left: 2px solid #3d6f68; border-bottom: 2px solid #4f8f84; box-shadow: inset 0 -1px #5f9c9c; padding: 0 17px 0 14px; font-size: 15px; }
.menus { display: flex; gap: 15px; align-items: flex-start; }
.menu { font: 700 15px "Liberation Serif", serif; text-underline-offset: 3px; margin-top: -4px; line-height: 18px; }
.clock { font-style: italic; line-height: 17px; margin-top: -4px; }
.work { flex: 1; min-height: 0; display: flex; }
.side { width: 155px; flex: none; display: flex; flex-direction: column; background: #52ceae; padding: 3px 2px 2px 3px; border-left: 1px solid #222; }
.jobinfo { background: #9bdbdb; border: 1px solid #000; font-size: 15px; line-height: 17px; flex: none; margin-left: -1px; }
.jobinfo div { height: 18px; padding-left: 2px; white-space: nowrap; }
.jobinfo div + div { border-top: 2px solid #000; height: 19px; line-height: 16px; }
.matrix { border: 1px solid #000; margin: 1px 0 0 -1px; padding: 2px; flex: none; }
.bevel { display: block; width: 100%; background: #9bdbdb; border: 2px solid; border-color: #c6ffff #4f8f8c #4f8f8c #c6ffff; text-align: left; padding-left: 2px; font: 700 15px/18px "Liberation Mono", monospace; }
.listwrap { flex: 1; min-height: 0; display: flex; margin-top: 3px; }
.list { width: 130px; background: #52ceae; border-top: 1px solid #1f6e5e; border-left: 2px solid #1f6e5e; border-right: 5px solid #8fe9d2; border-bottom: 3px solid #8fe9d2; overflow: hidden; padding-left: 1px; }
.group { background: #000; padding: 1px 2px; margin-bottom: 3px; width: 117px; }
.group:first-child { padding-top: 0; }
.layer { display: flex; height: 16px; gap: 2px; align-items: center; }
.tick { appearance: none; width: 14px; height: 14px; flex: none; background: #fff; border: 2px solid #fff; box-shadow: inset 0 0 0 2px #000; }
.tick.on { border-color: #0000b4; box-shadow: inset 0 0 0 2px #0000b4; }
.swatch { width: 14px; height: 14px; flex: none; }
.red { background: #f00; } .blue { background: #1a1aff; } .lime { background: #0f0; }
.lname { flex: 1; height: 14px; line-height: 13px; background: #9bdbdb; padding: 0 2px 0 1px; display: flex; align-items: center; justify-content: space-between; }
.hand { width: 8px; height: 8px; flex: none; }
.mask { background: #00a57c; } .signal { background: #ffc84e; } .silk { background: #fff; } .drill { background: #98b3be; } .rout { background: #dadada; }
.scroll { width: 15px; margin-left: 4px; background: #46b095; border: 2px solid; border-color: #2a7a68 #8fe9d2 #8fe9d2 #2a7a68; display: flex; flex-direction: column; }
.scroll svg { width: 11px; height: 12px; }
.thumb { flex: 1; margin-top: 20px; background: #52ceae; border: 1px solid; border-color: #a8eedd #1f6e5e #1f6e5e #a8eedd; }
.selected { flex: none; margin: 4px 0 0 -1px; border: 1px solid #000; background: #ffc84e; height: 20px; line-height: 17px; padding-left: 3px; }
.canvas { flex: 1; min-width: 0; background: #000; overflow: hidden; }
.right { width: 122px; flex: none; background: #000; display: flex; flex-direction: column; }
.tools { display: grid; grid-template-columns: repeat(3, 40px); grid-auto-rows: 40px; border-top: 2px solid #7ba; border-right: 2px solid #5e9c94; border-bottom: 2px solid #7a8; }
.tools.grey { border-color: #777; }
.tool { margin: 0 1px 1px 0; border: 3px solid; background: #9bdbdb; border-color: #c4f4f4 #568e8c #568e8c #c4f4f4; padding: 1px; }
.tool svg { width: 31px; height: 31px; display: block; border: 1px solid #000; }
.grey .tool { background: #ccc; border-color: #eee #888 #888 #eee; }
.grey .whitebox { background: #fff; border-color: #fff #aaa #aaa #fff; }
.grey .gold { background: #ffc84e; border-color: #ffe0a0 #a8802c #a8802c #ffe0a0; }
.tool.redbox { border-color: #c02020 #901818 #901818 #c02020; }
.overview { margin-top: 82px; height: 103px; background: #f00; border-right: 2px solid #444; }
.coord { margin-top: auto; background: #52ceae; border-top: 2px solid #2a7a68; font-size: 15px; line-height: 15px; height: 47px; padding: 7px 0 0 26px; }
.command { height: 35px; flex: none; display: flex; background: #ffc; border-top: 1px solid #000; border-bottom: 2px solid #000; align-items: stretch; }
.cbtn { width: 29px; margin: 0 1px; border: 3px double #a0a080; background: #ffc; padding: 0; border-color: #f2f2b8 #8c8c70 #8c8c70 #f2f2b8; outline: 1px solid #000; outline-offset: 0; display: grid; place-items: center; flex: none; }
.cbtn svg { width: 20px; height: 20px; fill: none; stroke: #000; }
.cbtn + .cbtn { margin-left: 2px; }
.cbtn.on { border: 4px solid #52b89c; }
.xy { padding-left: 2px; width: 48px; line-height: 30px; white-space: nowrap; flex: none; }
.xybox { width: 173px; border: 1px solid #000; border-width: 0 1px; padding: 2px; flex: none; }
.xybox input { width: 100%; height: 100%; border: 2px solid; border-color: #8c8c70 #d8d8a8 #d8d8a8 #8c8c70; background: #ffc; padding-left: 4px; }
.msg { flex: 1; padding-left: 3px; line-height: 30px; border-left: 1px solid #000; white-space: nowrap; overflow: hidden; }
.unitbox { width: 82px; border-left: 2px solid #000; padding: 2px; background: #52ceae; }
.unit { width: 100%; height: 100%; border: 2px solid; border-color: #a8eedd #1f6e5e #1f6e5e #a8eedd; font-size: 15px; display: flex; justify-content: space-around; align-items: center; }
.unit i { width: 12px; height: 6px; border: 2px solid; border-color: #a8eedd #1f6e5e #1f6e5e #a8eedd; }
.status { height: 29px; flex: none; background: #5f9c94; padding: 1px 2px 1px 2px; margin-bottom: 10px; }
.status div { height: 100%; background: #b4ffff; border: 1px solid #000; box-shadow: inset 3px 3px #9be4e4, inset -3px -3px #6fb0b0, inset 0 0 0 4px #b4ffff; }

/* Popview */
.popview { position: absolute; left: 180px; top: 244px; width: 405px; height: 409px; background: #0a0c0e; border: 1px solid #8a9298; border-radius: 7px; padding: 0 5px 7px 5px; display: flex; flex-direction: column; }
.popview header { height: 28px; display: flex; align-items: center; gap: 5px; background: linear-gradient(100deg, #777b80, #65686d 22%, #1a1c20 40%, #0a0c10 60%, #3a3d42 85%, #4c4f54); margin: 0 -5px; padding: 0 5px 0 6px; border-radius: 6px 6px 0 0; }
.popview h2 { flex: 1; font-size: 12px; line-height: 20px; color: #000; }
.close { align-self: flex-start; width: 47px; height: 19px; border: 1px solid #999; border-top: 0; border-radius: 0 0 4px 4px; background: #2b2d31; color: #fff; font-weight: 800; font-size: 16px; line-height: 14px; }
.pbody { flex: 1; min-height: 0; display: flex; flex-direction: column; border: 1px solid #8a9298; background: #52ceae; }
.pmain { flex: 1; min-height: 0; display: flex; }
.pcanvas { flex: 1; background: #000; border: 3px solid; border-color: #2f6e60 #a8eedd #a8eedd #2f6e60; overflow: hidden; }
.ptools { width: 38px; border: 0 solid #000; border-width: 1px 2px 0; display: flex; flex-direction: column; }
.ptool { height: 33px; margin-bottom: 2px; outline: 1px solid #000; border: 2px solid #5cc4ac; background: #9bdbdb; box-shadow: inset 2px 2px #c6ffff, inset -2px -2px #4f8f8c; display: grid; place-items: center; }
.ptool svg { width: 21px; height: 21px; display: block; }
.pclose { flex: none; height: 29px; border: 1px solid #000; padding: 1px; }
.pclose .bevel { height: 100%; text-align: center; line-height: 20px; }

/* Excel */
.excel { position: absolute; left: 594px; top: 0; width: 752px; bottom: 32px; border: 1px solid #456; border-top: 0; border-radius: 0 0 8px 8px; padding: 0 6px 6px; background: linear-gradient(#9cc4d4, #d4eaf2 15%, #8ca4b4 28%, #4a6278 34%, #a8c0d0 60%, #566e84 86%, #b0ccd6 95%); box-shadow: 2px 2px 10px #000a; color: #1e395b; }
.client { height: 100%; display: flex; flex-direction: column; background: #c3daf5; border: 1px solid #4c6c94; border-top: 0; overflow: hidden; }
.tabs { height: 12px; flex: none; display: flex; align-items: flex-end; background: #bfdbff; color: #1e4a8a; position: relative; }
.tabs button { height: 30px; line-height: 16px; padding: 8px 13px 0; margin-right: 3px; width: auto; }
.tabs button.cur { background: #e4eefb; border: 1px solid #8db2e3; border-bottom: 0; padding: 7px 11px 0; }
.tabs .orb { width: 47px; flex: none; }
.wctl { margin-left: auto; display: flex; align-items: flex-end; gap: 11px; color: #5b6f8d; padding-right: 5px; height: 20px; padding-bottom: 7px; }
.wctl i { width: 12px; height: 12px; border-radius: 6px; background: #2b58a8; }
.wctl .w1, .wctl .w2 { height: 2px; border-radius: 0; background: #5b6f8d; width: 8px; margin-bottom: 3px; }
.wctl .w3 { background: none; line-height: 12px; width: 8px; }
.ribbon { height: 106px; flex: none; display: flex; gap: 3px; padding: 2px 2px 3px; border: 1px solid #8db2e3; border-radius: 4px; background: linear-gradient(#dbe6f4, #cfdff2 16%, #c9daef 17%, #e0f0fb); }
.rg { border: 1px solid #9ebbde; border-radius: 3px; display: flex; flex-direction: column; background: linear-gradient(#dde8f5, #d0dff1 18%, #c8d9ee 19%, #e0ecf9 80%); }
.g1 { width: 72px; } .g2 { width: 151px; } .g3 { width: 112px; } .g4 { width: 88px; } .g5 { width: 42px; } .g6 { width: 68px; } .g7 { width: 124px; }
.rb { flex: 1; min-height: 0; display: flex; padding: 2px 3px 0; }
.rb.col { flex-direction: column; gap: 3px; }
.g3 .rb.col { padding-top: 3px; gap: 4px; }
.rg h3 { height: 18px; background: #c1d8f0; color: #3e6aaa; font-size: 12px; line-height: 18px; text-align: center; display: flex; justify-content: center; position: relative; }
.g1 h3, .g2 h3, .g3 h3, .g4 h3 { padding-right: 17px; }
.launch { position: absolute; right: 5px; top: 3px; width: 8px; height: 8px; border: 1px solid #7d9cc6; border-width: 1px 0 0 1px; box-shadow: 1px 1px #fff; background: linear-gradient(135deg, transparent 55%, #6482b0 56%); }
.pale { opacity: .6; }
.row { display: flex; gap: 4px; height: 21px; }
.row.sel { height: 26px; gap: 0; }
select { appearance: none; border: 1px solid #a9b8cc; background: #ececec linear-gradient(#8a8a8a, #8a8a8a) no-repeat right 6px center / 5px 1px; flex: 1; padding-left: 3px; color: #8d8d8d; background-image: linear-gradient(#9a9a9a, #9a9a9a), linear-gradient(#9a9a9a, #9a9a9a), linear-gradient(#9a9a9a, #9a9a9a); background-position: right 6px top 11px, right 7px top 12px, right 8px top 13px; background-size: 5px 1px, 3px 1px, 1px 1px; }
select.wide { flex: 2 1 20px; margin-right: 1px; }
.bg { display: flex; border: 1px solid #92aed4; border-radius: 3px; background: #cfdff2; height: 21px; }
.bg button { flex: 1; display: grid; place-items: center; color: #54698c; line-height: 18px; min-width: 0; }
.bg button + button { border-left: 1px solid #b8cce6; }
.w79 { width: 79px; } .w45 { width: 45px; } .w35 { width: 35px; } .w67 { width: 67px; } .w69 { width: 69px; }
.ser { font: 700 14px "Liberation Serif", serif; }
.bg button.l { font-size: 16px; }
.bg .ser { display: flex; justify-content: center; }
.ser sup { font-size: 8px; line-height: 8px; }
.bg .fc { border-bottom: 3px solid #9a9a9a; line-height: 14px; }
.bg .wen, .bg .dec { display: flex; flex-direction: column; justify-content: center; align-items: center; white-space: nowrap; }
.wen span, .dec span { line-height: 9px; font-size: 8px; height: 9px; }
.bg .wen { flex: none; width: 20px; }
.bg .slant { font-style: italic; font-size: 11px; }
.flat { display: flex; align-items: center; gap: 3px; padding-left: 3px; }
.dn { display: inline-block; width: 0; height: 0; border: 3px solid transparent; border-top: 4px solid #4a6a9c; border-bottom: 0; flex: none; }
.dn.dim { border-top-color: #a3b1c6; }
.big { width: 42px; display: flex; flex-direction: column; align-items: center; color: #1e4a8a; line-height: 16px; padding-top: 2px; white-space: nowrap; }
.big .dn { margin-top: 6px; }
.big span .dn { margin: 0 0 2px 3px; }
.g1 .big svg { margin-bottom: 4px; }
.stack { display: flex; flex-direction: column; gap: 6px; padding: 2px 0 0 4px; }
.stack button { height: 16px; display: flex; align-items: center; gap: 4px; }
.dis { color: #8f97a3; }
.big.dis, .cells .dis { color: #8f97a3; }
.cells { color: #1e4a8a; }
.rb.cells { gap: 6px; padding-top: 3px; }
.cells button { display: flex; align-items: center; gap: 3px; height: 16px; line-height: 16px; white-space: nowrap; }
.cells .dn { margin-left: 2px; }
.edit { width: 31px; padding-top: 1px; }
.sig { font: 700 17px/16px "Liberation Serif", serif; color: #5c6b84; }
.sig .dn { margin-left: 2px; }
.g7 .big { width: 43px; line-height: 17px; }
.g7 .big svg { margin-bottom: 4px; display: block; }
.az { position: relative; display: block; }
.az em { position: absolute; left: 0; top: 0; display: flex; flex-direction: column; font: 700 14px "Liberation Sans", sans-serif; color: #8f98a9; }
.az em span { height: 14px; line-height: 14px; }
.style { height: 100%; display: flex; flex-direction: column; align-items: center; color: #1e4a8a; line-height: 16px; padding-top: 4px; }
.style span { width: 31px; height: 31px; border: 1px solid #a9c4e6; border-radius: 3px; background: #e4eefa; font: italic 700 22px/26px "Liberation Serif", serif; color: #2a4d8c; margin-bottom: 4px; }
.style .dn { margin-top: 7px; }
.security { flex: none; display: flex; justify-content: space-between; padding: 6px 1px 5px 2px; }
.sbox { flex: 1; height: 33px; border: 1px solid #9ebbde; background: linear-gradient(#fff, #e4f0fb); display: flex; align-items: center; padding-left: 3px; color: #1e4a8a; gap: 11px; }
.sbox .ic { width: 15px; }
.sbox button { width: 70px; height: 21px; border: 1px solid #9ebbde; background: #fff; }
.sx { width: 20px; height: 16px; color: #67758c; font-weight: 700; font-size: 15px; line-height: 14px; padding-left: 3px; }
.formula { height: 21px; flex: none; display: flex; border: 1px solid #6a8ab8; border-width: 1px 0; background: #fff; }
.name { width: 158px; display: flex; align-items: center; color: #000; }
.name input { width: 144px; padding-left: 33px; font: 13px "Liberation Mono", monospace; }
.name .dn { border-width: 4px; border-top: 5px solid #000; border-bottom: 0; }
.fx { width: 78px; display: flex; justify-content: space-between; align-items: center; padding: 0 5px; border: 1px solid #8aa6d0; border-width: 0 1px; border-radius: 10px 0 0 10px; background: linear-gradient(#e8f0fa, #a8c2e6); }
.fx i { width: 9px; height: 9px; border-radius: 5px; background: #9fb0c8; }
.fx em { font: italic 700 15px "Liberation Serif", serif; color: #444; }
.finput { flex: 1; min-width: 0; }
.formula button { width: 16px; background: #c9dcf4; border-left: 1px solid #6a8ab8; }
.sheetrow { flex: 1; min-height: 0; display: flex; border-top: 3px solid #dbe8f8; }
.sheet { flex: 1; min-width: 0; position: relative; overflow: hidden; background: #fff; }
table { table-layout: fixed; width: 722px; border-collapse: separate; border-spacing: 0; color: #000; }
.k0 { width: 48px; } .kB { width: 64px; } .kC { width: 161px; } .kD { width: 88px; } .kE { width: 117px; } .kF { width: 104px; } .kG { width: 71px; }
th { font: 22px/22px "Liberation Serif", serif; color: #3a3a3a; padding: 0; }
thead th { height: 29px; padding-top: 4px; background: linear-gradient(#f6f8fc, #d2dbea); border-right: 1px solid #9ab0cf; border-bottom: 1px solid #9ab0cf; font-size: 21px; }
thead th:last-child { border-right: 0; text-align: right; }
.corner { background: linear-gradient(135deg, #a9c4e9 62%, #e8f0fa 63%); }
tbody tr { height: 44px; }
tbody .tall { height: 86px; }
tbody th { background: #e4ecf7; border: 0 solid #9ab0cf; border-width: 0 1px 1px 0; vertical-align: bottom; }
td { border-bottom: 1px solid #000; padding: 0; vertical-align: middle; }
.no { text-align: center; font: 22px "Liberation Serif", serif; border-right: 1px solid #000; padding-top: 6px; }
.txt { font: 20px/28px "Noto Sans CJK SC", sans-serif; padding-left: 4px; white-space: nowrap; }
.yellow { background: #ff0; }
.shot { position: absolute; left: 58px; top: 29px; right: 0; height: 472px; display: flex; flex-direction: column; overflow: hidden; background: #000; font: 700 9px "Liberation Mono", monospace; color: #000; }
.smain { height: 401px; flex: none; display: flex; }
.sside { width: 112px; flex: none; background: #52ceae; display: flex; flex-direction: column; padding: 0 1px 0 2px; }
.sdraw { flex: none; }
.sside .matrix { margin: 0 0 3px; padding: 1px; border-top: 0; border-color: #1f6e5e; }
.sside .bevel { font-size: 11px; line-height: 15px; border-width: 1px; }
.sside .list { width: 89px; height: 251px; border: 1px solid #1f6e5e; border-right-color: #a8eedd; border-bottom-color: #a8eedd; padding: 1px; margin-left: 1px; }
.sside .group { width: 85px; padding: 1px; margin-bottom: 2px; display: flex; flex-direction: column; }
.p0 { height: 96px; } .p1 { height: 25px; } .p2 { height: 118px; }
.sside .layer { flex: 1; height: auto; gap: 1px; }
.sside .tick { width: 11px; height: 11px; box-shadow: inset 0 0 0 1px #000; border-width: 2px; }
.sside .swatch { width: 11px; height: 11px; }
.sside .lname { height: 11px; line-height: 10px; padding-left: 1px; }
.sside .hand { width: 6px; height: 6px; }
.ssel { margin: auto 0 0; height: 16px; background: #ffc84e; border: 1px solid #1f6e5e; line-height: 14px; padding-left: 2px; }
.scmd { height: 25px; flex: none; display: flex; background: #ffc; border-bottom: 1px solid #000; margin-top: 1px; margin-left: 2px; }
.scmd .cbtn { width: 20px; border-width: 2px; }
.scmd .cbtn svg { width: 14px; height: 14px; }
.scmd .xy { width: 33px; line-height: 24px; }
.scmd .xybox { width: 125px; }
.scmd .xybox i { display: block; height: 100%; border: 1px solid #8c8c70; }
.scmd .msg { line-height: 24px; font-size: 8px; }
.sstat { height: 21px; flex: none; margin: 1px 0 2px 2px; background: #b4ffff; border: 1px solid #5f9c94; line-height: 18px; white-space: nowrap; padding-left: 316px; overflow: hidden; font-size: 8px; }
.stask { flex: 1; display: flex; gap: 3px; background: #15181b; padding-bottom: 1px; color: #ddd; font: 10px "Open Sans", "Noto Sans CJK SC", sans-serif; }
.stask .start { width: 26px; height: 24px; margin: -2px 0 0 6px; flex: none; }
.mini { width: 9px; height: 12px; background: #cde; margin: 5px 9px 0 17px; flex: none; }
.stask span { width: 75px; flex: none; border: 1px solid #555; background: linear-gradient(#55585c, #1d1f22 50%); display: flex; align-items: center; padding-left: 6px; gap: 5px; white-space: pre; overflow: hidden; }
.stask .ic { width: 12px; height: 12px; }
.handle { position: absolute; width: 8px; height: 8px; background: #e8f4fa; border: 1px solid #6a8aa0; }
.h1 { left: 54px; top: 216px; } .h2 { left: 53px; top: 497px; width: 10px; height: 10px; border-radius: 5px; } .h3 { left: 551px; top: 496px; }
.redframe { position: absolute; left: 75px; top: 503px; width: 635px; height: 51px; border: 2px solid #c81414; box-shadow: 2px 2px 4px #0006, inset 2px 2px 4px #0004; }
.vscroll { width: 16px; flex: none; background: linear-gradient(90deg, #6e90c0, #86a4ce); display: flex; flex-direction: column; align-items: center; }
.split { background: #fff; border: 1px solid #6a8ab8; }
.vscroll .split { width: 14px; height: 7px; }
.up { border: 4px solid transparent; border-bottom: 5px solid #3c5580; border-top: 0; margin: 7px 0 16px; }
.vthumb { width: 14px; height: 109px; border: 1px solid #6a8ab8; background: linear-gradient(90deg, #f4f7fb, #cbd8ea); display: grid; place-items: center; }
.ridge { width: 8px; height: 8px; background: repeating-linear-gradient(#7a8eac 0 1px, transparent 1px 2px); }
.hthumb .ridge { background: repeating-linear-gradient(90deg, #7a8eac 0 1px, transparent 1px 2px); }
.vscroll .dn { margin: auto 0 6px; border-width: 4px; border-top: 5px solid #3c5580; border-bottom: 0; }
.sheettabs { height: 18px; flex: none; display: flex; background: #a9c2e6; border-bottom: 1px solid #6a8ab8; line-height: 17px; font-size: 13px; color: #1e4a8a; white-space: nowrap; }
.nav { width: 62px; display: flex; justify-content: space-around; background: #d4e2f4; font: 9px "DejaVu Sans", sans-serif; }
.sheettabs .cur { width: 46px; background: #fff; border-right: 1px solid #7f9cc8; }
.st { width: 37px; padding-left: 4px; background: linear-gradient(115deg, #8aa6d0 6%, #e6eefa 9%, #c8daf2 88%, #8aa6d0 91%); }
.st .ic { height: 15px; margin-left: 9px; }
.hscroll { margin-left: auto; width: 288px; display: flex; background: #7f9fcd; margin-right: 15px; color: #3c5580; }
.hscroll .split { width: 6px; }
.hscroll b { padding: 0 6px; }
.hthumb { width: 127px; margin-left: 6px; border: 1px solid #6a8ab8; background: linear-gradient(#f8fafd, #c8d6ea); display: grid; place-items: center; }
.hscroll .end { margin-left: auto; }
.xstatus { height: 21px; flex: none; display: flex; align-items: center; background: linear-gradient(#d8e6f8, #b6cef0 45%, #c8daf4); padding: 0 6px; color: #1e395b; }
.ready { padding-right: 8px; border-right: 1px solid #9ab4da; }
.views { margin-left: auto; display: flex; border: 1px solid #8aa6d0; }
.views button { width: 18px; height: 16px; display: grid; place-items: center; }
.views .cur { background: #fbd896; }
.views svg { width: 14px; height: 12px; fill: #eee; stroke: #445; }
.pct { padding: 0 10px 0 9px; }
.rnd { width: 16px; height: 16px; border: 1px solid #51689a; border-radius: 8px; line-height: 12px; font-weight: 700; font-size: 14px; background: #e8eef8; }
input[type="range"] { appearance: none; width: 99px; height: 16px; margin: 0 2px; background: linear-gradient(#7f95bb, #7f95bb) no-repeat center / 100% 1px; }
input[type="range"]::-webkit-slider-thumb { appearance: none; width: 9px; height: 13px; border: 1px solid #51689a; border-radius: 1px 1px 5px 5px; background: #e8eef8; }
.grip { width: 12px; height: 12px; margin-left: 4px; background: radial-gradient(#4f6fa4 1px, transparent 1px) 0 0 / 4px 4px; clip-path: polygon(100% 0, 100% 100%, 0 100%); }

/* Taskbar */
.taskbar { height: 29px; flex: none; position: relative; display: flex; align-items: stretch; gap: 2px; background: linear-gradient(#4a86b4, #24608f 12%, #1d5484); border-top: 1px solid #17304a; color: #fff; }
.startbtn { width: 54px; flex: none; }
.startbtn svg { width: 38px; height: 38px; display: block; margin: -8px 0 0 8px; position: relative; }
.dots { width: 12px; flex: none; margin: 4px 5px 0 1px; height: 22px; background: radial-gradient(#0a2c4c 1px, transparent 1px) 0 0 / 4px 4px; }
.task { width: 78px; flex: none; margin: 0; border: 1px solid #a4c8de; border-radius: 3px; background: linear-gradient(#8ab0c8, #5a8fb4 45%, #3c7aa4 50%, #4a8cb4); box-shadow: 0 0 0 1px #1a3c58; display: flex; align-items: center; gap: 5px; padding-left: 5px; white-space: nowrap; overflow: hidden; }
.task .ic { width: 17px; height: 17px; }
.tgroup { display: flex; border-radius: 3px; flex: none; }
.tgroup .task { border-radius: 0; background: linear-gradient(#4878a0, #2c6698 45%, #245c90); border-color: #5a8cb4; }
.tgroup .task.cur { background: linear-gradient(#a8c0d0, #7ca4c2 45%, #6c9cc0); }
.dark .task { background: linear-gradient(#486888, #254c78 45%, #1f4a7a); border-color: #6484a8; border-width: 1px 0; }
.dark + .dots { margin-left: auto; margin-right: 2px; }
.tray { display: flex; align-items: center; gap: 7px; padding: 0 15px 0 3px; flex: none; }
.tray .nudge { margin-left: -5px; }
.tray time { margin-left: 14px; }
.peek { width: 13px; flex: none; border: 1px solid #6a8cb0; background: linear-gradient(#7a9cbc, #2c5684); }
</style>
